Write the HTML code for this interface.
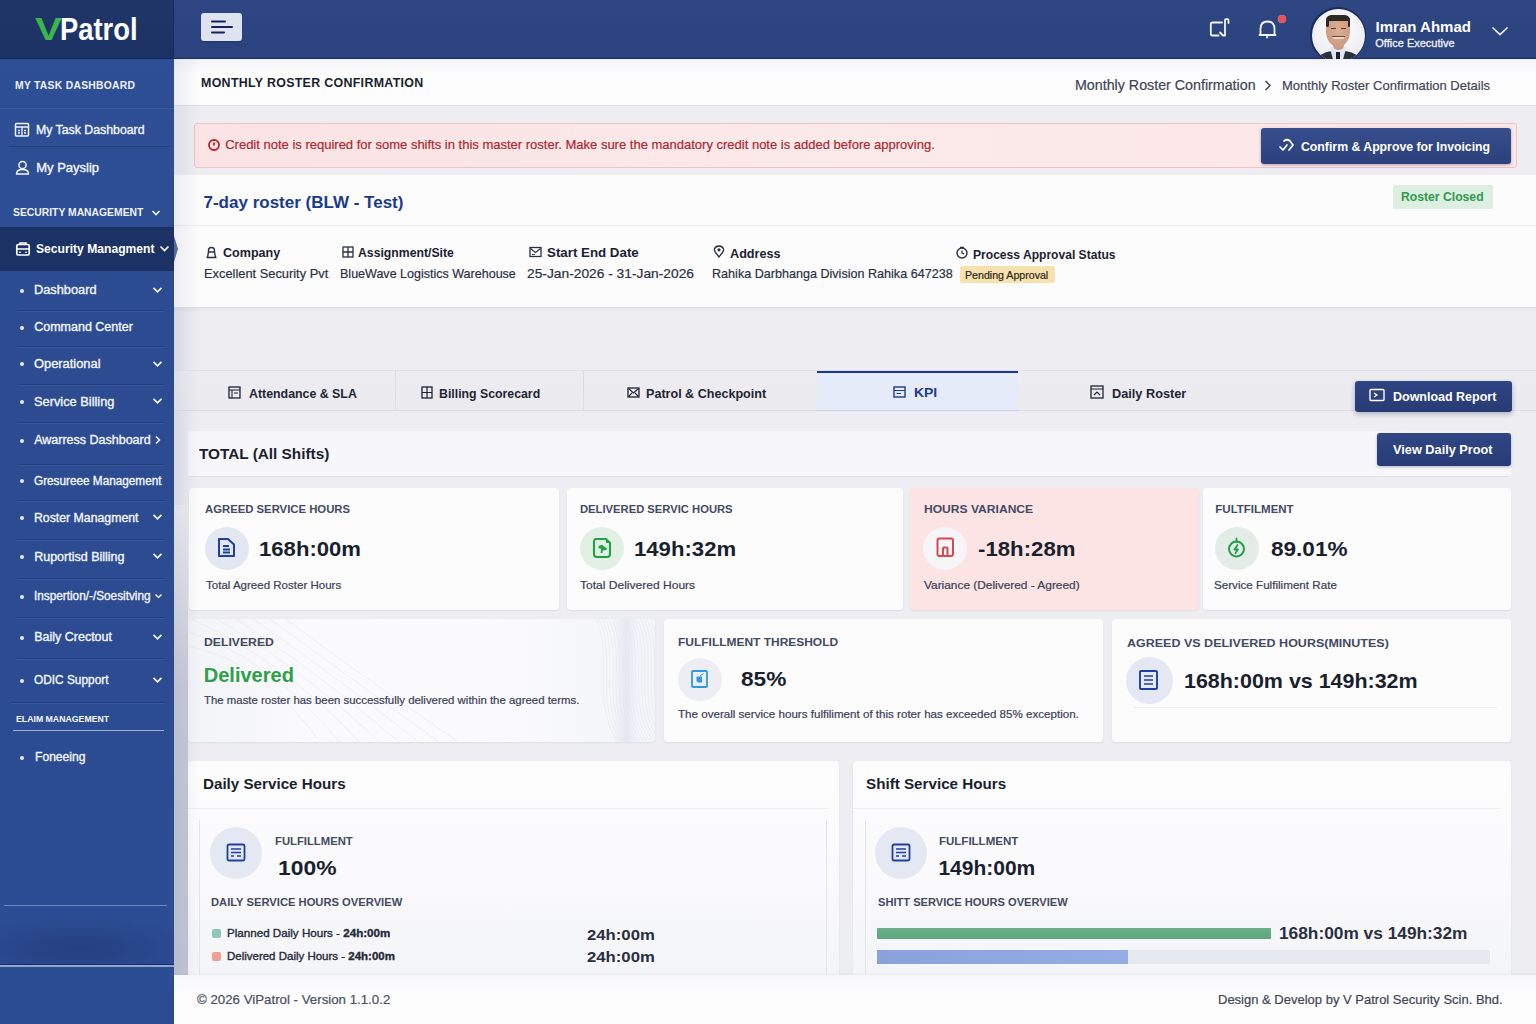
<!DOCTYPE html><html><head><meta charset="utf-8"><style>
*{box-sizing:border-box;margin:0;padding:0}
html,body{width:1536px;height:1024px;overflow:hidden}
body{font-family:"Liberation Sans",sans-serif;background:#ededf2;position:relative}
.a{position:absolute}
.t{position:absolute;line-height:1;white-space:nowrap;transform-origin:0 50%}
svg{position:absolute;overflow:visible}
</style></head><body>
<div class="a" style="left:174px;top:300px;width:20px;height:205px;background:linear-gradient(90deg,rgba(150,155,180,0.10),rgba(150,155,180,0))"></div>
<div class="a" style="left:174px;top:505px;width:14px;height:470px;background:linear-gradient(180deg,rgba(185,189,204,0.0),rgba(185,189,204,0.75) 40%,rgba(190,194,208,0.9))"></div>
<div class="a" style="left:0;top:0;width:174px;height:1024px;background:linear-gradient(180deg,#2e4f96 0%,#2c4b91 40%,#2c4c93 100%)"></div>
<div class="a" style="left:0;top:0;width:174px;height:59px;background:linear-gradient(180deg,#203669,#1c3164);border-bottom:1px solid #142450"></div>
<div class="t" style="left:34.6px;top:14.1px;font-size:30.5px;font-weight:bold;color:#3cb54a;transform:scaleX(1.325);">V</div>
<div class="t" style="left:60.2px;top:14.1px;font-size:30.5px;font-weight:bold;color:#ffffff;transform:scaleX(0.898);">Patrol</div>
<div class="t" style="left:15.3px;top:79.7px;font-size:11px;font-weight:bold;color:#eef2fa;letter-spacing:0.3px;transform:scaleX(0.939);">MY TASK DASHBOARD</div>
<div class="a" style="left:0;top:107px;width:174px;height:2px;background:linear-gradient(180deg,#243f7c,#4564a8)"></div>
<svg style="left:14px;top:122px" width="16" height="16"><rect x="1.5" y="1.5" width="13" height="12.5" rx="1" fill="none" stroke="#f3f6fc" stroke-width="1.5"/><path d="M1.5 5 H14.5 M8 5 V14 M4 8.5 H6 M10 8.5 H12 M4 11 H6 M10 11 H12" fill="none" stroke="#f3f6fc" stroke-width="1.3"/></svg>
<div class="t" style="left:36.2px;top:123.0px;font-size:13px;font-weight:normal;color:#f3f6fc;-webkit-text-stroke:0.35px #f3f6fc;transform:scaleX(0.947);">My Task Dashboard</div>
<div class="a" style="left:9px;top:146px;width:163px;height:1px;background:#243f7c"></div>
<svg style="left:15px;top:160px" width="15" height="15"><circle cx="7.5" cy="5" r="3.6" fill="none" stroke="#f3f6fc" stroke-width="1.5"/><path d="M1.5 14 Q1.5 9.5 7.5 9.5 Q13.5 9.5 13.5 14 Z" fill="none" stroke="#f3f6fc" stroke-width="1.5" stroke-linejoin="round"/></svg>
<div class="t" style="left:36.2px;top:160.9px;font-size:13px;font-weight:normal;color:#f3f6fc;-webkit-text-stroke:0.35px #f3f6fc;">My Payslip</div>
<div class="t" style="left:13.3px;top:206.7px;font-size:11px;font-weight:bold;color:#eef2fa;transform:scaleX(0.941);">SECURITY MANAGEMENT</div>
<svg style="left:151px;top:209px" width="10" height="8"><path d="M1.5 2 L5 5.5 L8.5 2" fill="none" stroke="#eef2fa" stroke-width="1.6"/></svg>
<div class="a" style="left:0;top:227px;width:174px;height:44px;background:#1c3164"></div>
<svg style="left:15px;top:241px" width="16" height="15"><path d="M5 3.5 V2 H11 V3.5" fill="none" stroke="#fff" stroke-width="1.6"/><rect x="1.8" y="3.5" width="12.4" height="10.5" rx="1.5" fill="none" stroke="#fff" stroke-width="1.7"/><path d="M1.8 8 H14.2 M5 10.5 V12 M11 10.5 V12" fill="none" stroke="#fff" stroke-width="1.5"/></svg>
<div class="t" style="left:36.2px;top:241.9px;font-size:13px;font-weight:bold;color:#ffffff;transform:scaleX(0.932);">Security Managment</div>
<svg style="left:159px;top:244px" width="12" height="10"><path d="M1.5 2.5 L5.5 6.5 L9.5 2.5" fill="none" stroke="#ffffff" stroke-width="1.6"/></svg>
<div class="a" style="left:20px;top:289px;width:4px;height:4px;border-radius:2px;background:#e6ebf6"></div>
<div class="t" style="left:34.2px;top:284.1px;font-size:12.5px;font-weight:normal;color:#f3f6fc;-webkit-text-stroke:0.35px #f3f6fc;transform:scaleX(1.022);">Dashboard</div>
<svg style="left:152px;top:286px" width="11" height="8"><path d="M1.5 1.8 L5.5 5.8 L9.5 1.8" fill="none" stroke="#eef2fa" stroke-width="1.8"/></svg>
<div class="a" style="left:17px;top:310px;width:148px;height:1px;background:#243f7e;box-shadow:0 1px 0 rgba(90,120,190,0.25)"></div>
<div class="a" style="left:20px;top:326px;width:4px;height:4px;border-radius:2px;background:#e6ebf6"></div>
<div class="t" style="left:34.2px;top:321.0px;font-size:12.5px;font-weight:normal;color:#f3f6fc;-webkit-text-stroke:0.35px #f3f6fc;">Command Center</div>
<div class="a" style="left:17px;top:346px;width:148px;height:1px;background:#243f7e;box-shadow:0 1px 0 rgba(90,120,190,0.25)"></div>
<div class="a" style="left:20px;top:362px;width:4px;height:4px;border-radius:2px;background:#e6ebf6"></div>
<div class="t" style="left:34.2px;top:357.9px;font-size:12.5px;font-weight:normal;color:#f3f6fc;-webkit-text-stroke:0.35px #f3f6fc;transform:scaleX(1.029);">Operational</div>
<svg style="left:152px;top:360px" width="11" height="8"><path d="M1.5 1.8 L5.5 5.8 L9.5 1.8" fill="none" stroke="#eef2fa" stroke-width="1.8"/></svg>
<div class="a" style="left:17px;top:384px;width:148px;height:1px;background:#243f7e;box-shadow:0 1px 0 rgba(90,120,190,0.25)"></div>
<div class="a" style="left:20px;top:400px;width:4px;height:4px;border-radius:2px;background:#e6ebf6"></div>
<div class="t" style="left:34.2px;top:395.8px;font-size:12.5px;font-weight:normal;color:#f3f6fc;-webkit-text-stroke:0.35px #f3f6fc;transform:scaleX(1.025);">Service Billing</div>
<svg style="left:152px;top:397px" width="11" height="8"><path d="M1.5 1.8 L5.5 5.8 L9.5 1.8" fill="none" stroke="#eef2fa" stroke-width="1.8"/></svg>
<div class="a" style="left:17px;top:422px;width:148px;height:1px;background:#243f7e;box-shadow:0 1px 0 rgba(90,120,190,0.25)"></div>
<div class="a" style="left:20px;top:439px;width:4px;height:4px;border-radius:2px;background:#e6ebf6"></div>
<div class="t" style="left:34.2px;top:434.4px;font-size:12.5px;font-weight:normal;color:#f3f6fc;-webkit-text-stroke:0.35px #f3f6fc;">Awarress Dashboard</div>
<svg style="left:154px;top:435px" width="8" height="10"><path d="M2 1.5 L5.5 5 L2 8.5" fill="none" stroke="#eef2fa" stroke-width="1.5"/></svg>
<div class="a" style="left:17px;top:464px;width:148px;height:1px;background:#243f7e;box-shadow:0 1px 0 rgba(90,120,190,0.25)"></div>
<div class="a" style="left:20px;top:479px;width:4px;height:4px;border-radius:2px;background:#e6ebf6"></div>
<div class="t" style="left:34.2px;top:474.8px;font-size:12.5px;font-weight:normal;color:#f3f6fc;-webkit-text-stroke:0.35px #f3f6fc;transform:scaleX(0.941);">Gresureee Management</div>
<div class="a" style="left:17px;top:500px;width:148px;height:1px;background:#243f7e;box-shadow:0 1px 0 rgba(90,120,190,0.25)"></div>
<div class="a" style="left:20px;top:516px;width:4px;height:4px;border-radius:2px;background:#e6ebf6"></div>
<div class="t" style="left:34.2px;top:511.8px;font-size:12.5px;font-weight:normal;color:#f3f6fc;-webkit-text-stroke:0.35px #f3f6fc;transform:scaleX(0.983);">Roster Managment</div>
<svg style="left:152px;top:513px" width="11" height="8"><path d="M1.5 1.8 L5.5 5.8 L9.5 1.8" fill="none" stroke="#eef2fa" stroke-width="1.8"/></svg>
<div class="a" style="left:17px;top:539px;width:148px;height:1px;background:#243f7e;box-shadow:0 1px 0 rgba(90,120,190,0.25)"></div>
<div class="a" style="left:20px;top:555px;width:4px;height:4px;border-radius:2px;background:#e6ebf6"></div>
<div class="t" style="left:34.2px;top:550.7px;font-size:12.5px;font-weight:normal;color:#f3f6fc;-webkit-text-stroke:0.35px #f3f6fc;">Ruportisd Billing</div>
<svg style="left:152px;top:552px" width="11" height="8"><path d="M1.5 1.8 L5.5 5.8 L9.5 1.8" fill="none" stroke="#eef2fa" stroke-width="1.8"/></svg>
<div class="a" style="left:17px;top:578px;width:148px;height:1px;background:#243f7e;box-shadow:0 1px 0 rgba(90,120,190,0.25)"></div>
<div class="a" style="left:20px;top:595px;width:4px;height:4px;border-radius:2px;background:#e6ebf6"></div>
<div class="t" style="left:34.2px;top:590.4px;font-size:12.5px;font-weight:normal;color:#f3f6fc;-webkit-text-stroke:0.35px #f3f6fc;transform:scaleX(0.942);">Inspertion/-/Soesitving</div>
<svg style="left:154px;top:593px" width="9" height="7"><path d="M1.5 1.5 L4.5 4.5 L7.5 1.5" fill="none" stroke="#eef2fa" stroke-width="1.5"/></svg>
<div class="a" style="left:17px;top:617px;width:148px;height:1px;background:#243f7e;box-shadow:0 1px 0 rgba(90,120,190,0.25)"></div>
<div class="a" style="left:20px;top:636px;width:4px;height:4px;border-radius:2px;background:#e6ebf6"></div>
<div class="t" style="left:34.2px;top:631.0px;font-size:12.5px;font-weight:normal;color:#f3f6fc;-webkit-text-stroke:0.35px #f3f6fc;">Baily Crectout</div>
<svg style="left:152px;top:633px" width="11" height="8"><path d="M1.5 1.8 L5.5 5.8 L9.5 1.8" fill="none" stroke="#eef2fa" stroke-width="1.8"/></svg>
<div class="a" style="left:17px;top:658px;width:148px;height:1px;background:#243f7e;box-shadow:0 1px 0 rgba(90,120,190,0.25)"></div>
<div class="a" style="left:20px;top:679px;width:4px;height:4px;border-radius:2px;background:#e6ebf6"></div>
<div class="t" style="left:34.2px;top:674.1px;font-size:12.5px;font-weight:normal;color:#f3f6fc;-webkit-text-stroke:0.35px #f3f6fc;transform:scaleX(0.949);">ODIC Support</div>
<svg style="left:152px;top:676px" width="11" height="8"><path d="M1.5 1.8 L5.5 5.8 L9.5 1.8" fill="none" stroke="#eef2fa" stroke-width="1.8"/></svg>
<div class="a" style="left:10px;top:702px;width:156px;height:1px;background:#243f7e;box-shadow:0 1px 0 rgba(90,120,190,0.25)"></div>
<div class="t" style="left:16.2px;top:714.9px;font-size:9px;font-weight:bold;color:#f5f7fc;transform:scaleX(0.970);">ELAIM MANAGEMENT</div>
<div class="a" style="left:13px;top:730px;width:151px;height:1px;background:#9fb0d6"></div>
<div class="a" style="left:20px;top:756px;width:4px;height:4px;border-radius:2px;background:#e6ebf6"></div>
<div class="t" style="left:35.0px;top:751.4px;font-size:12.5px;font-weight:normal;color:#f3f6fc;-webkit-text-stroke:0.35px #f3f6fc;transform:scaleX(0.969);">Foneeing</div>
<div class="a" style="left:4px;top:905px;width:163px;height:1px;background:#6d86bd"></div>
<div class="a" style="left:0;top:912px;width:174px;height:52px;background:radial-gradient(ellipse 70% 60% at 45% 70%,rgba(20,38,90,0.3),rgba(20,38,90,0))"></div>
<div class="a" style="left:0;top:964px;width:174px;height:1px;background:#1a2f66"></div>
<div class="a" style="left:0;top:965px;width:174px;height:1.5px;background:#94a6d0"></div>
<div class="a" style="left:174px;top:0;width:1362px;height:59px;background:linear-gradient(180deg,#2e4783,#2a427e);border-bottom:1px solid #1b2e62"></div>
<div class="a" style="left:173px;top:0;width:1px;height:59px;background:#1a2c5c"></div>
<div class="a" style="left:201px;top:13px;width:41px;height:28px;background:#dfe3ef;border-radius:3px;box-shadow:0 1px 2px rgba(0,0,0,0.25)"></div>
<svg style="left:211px;top:19px" width="24" height="16"><path d="M1 2.5 H14 M1 8 H21 M1 13.5 H13" stroke="#16225a" stroke-width="2" stroke-linecap="round"/></svg>
<svg style="left:1208px;top:17px" width="24" height="22"><path d="M14 5.5 H4.5 Q2.8 5.5 2.8 7.2 V16.8 Q2.8 18.5 4.5 18.5 H10.5 M17 18.5 V3.2 Q17 2.2 18 2.2 H19.5 Q20.5 2.2 20.5 3.2 V6 M12 15.5 L15 18.5 H17" fill="none" stroke="#f2f5fb" stroke-width="1.8" stroke-linecap="round" stroke-linejoin="round"/></svg>
<svg style="left:1257px;top:18px" width="24" height="22"><path d="M3.5 17 V11 Q3.5 3.5 10.5 3.5 Q17.5 3.5 17.5 11 V17 M2.5 17 H18.5 M10.5 17 L10 19.5" fill="none" stroke="#f2f5fb" stroke-width="1.8" stroke-linecap="round" stroke-linejoin="round"/></svg>
<div class="a" style="left:1277.5px;top:14.5px;width:8px;height:8px;border-radius:50%;background:#e3545b;box-shadow:0 0 1px #f9c"></div>
<div class="a" style="left:1310px;top:7px;width:56px;height:52px;overflow:hidden">
<div class="a" style="left:0;top:0;width:56px;height:56px;border-radius:50%;background:#1a2a5a"></div>
<div class="a" style="left:1.5px;top:1.5px;width:53px;height:53px;border-radius:50%;background:radial-gradient(circle at 50% 40%,#ffffff,#f0f0f2 60%,#e4e4e8);overflow:hidden">
<div class="a" style="left:1px;top:42px;width:51px;height:20px;border-radius:24px 24px 0 0;background:#2a3040"></div>
<div class="a" style="left:18px;top:38px;width:17px;height:16px;background:#dde6f2;clip-path:polygon(0 0,100% 0,75% 100%,25% 100%)"></div>
<div class="a" style="left:24.5px;top:43px;width:4px;height:12px;background:#1c2030;clip-path:polygon(0 0,100% 0,100% 70%,50% 100%,0 70%)"></div>
<div class="a" style="left:21px;top:33px;width:11px;height:8px;background:#c99a80;border-radius:0 0 5px 5px"></div>
<div class="a" style="left:14.5px;top:6.5px;width:24px;height:32px;border-radius:46% 46% 50% 50%;background:radial-gradient(ellipse at 50% 45%,#dcae93,#c89478)"></div>
<div class="a" style="left:14.5px;top:6px;width:24px;height:6px;border-radius:12px 12px 2px 2px;background:#2e2826"></div>
<div class="a" style="left:14.5px;top:9px;width:2.5px;height:9px;border-radius:2px;background:#2e2826"></div>
<div class="a" style="left:36px;top:9px;width:2.5px;height:9px;border-radius:2px;background:#2e2826"></div>
<div class="a" style="left:19px;top:19px;width:5px;height:1.6px;background:#4a3a34"></div>
<div class="a" style="left:29px;top:19px;width:5px;height:1.6px;background:#4a3a34"></div>
<div class="a" style="left:20px;top:27px;width:13px;height:3.5px;border-radius:0 0 7px 7px;background:#e9d6cf;border-top:1px solid #6a4a40"></div>
</div>
</div>
<div class="t" style="left:1375.6px;top:19.2px;font-size:15px;font-weight:bold;color:#ffffff;">Imran Ahmad</div>
<div class="t" style="left:1375.3px;top:37.9px;font-size:11px;font-weight:normal;color:#f0f3fa;-webkit-text-stroke:0.3px #f0f3fa;">Office Executive</div>
<svg style="left:1491px;top:25px" width="18" height="12"><path d="M2 3 L9 9.5 L16 3" fill="none" stroke="#eef2fa" stroke-width="1.7" stroke-linecap="round"/></svg>
<div class="a" style="left:174px;top:60px;width:1362px;height:46px;background:linear-gradient(180deg,#f4f4f7,#fdfdfe 30%,#fdfdfe);border-bottom:1px solid #dfe0e6"></div>
<div class="t" style="left:201.3px;top:76.5px;font-size:12px;font-weight:bold;color:#1a1f2e;letter-spacing:0.3px;transform:scaleX(1.034);">MONTHLY ROSTER CONFIRMATION</div>
<div class="t" style="left:1074.7px;top:78.1px;font-size:14px;font-weight:normal;color:#3f4558;-webkit-text-stroke:0.2px #3f4558;transform:scaleX(1.018);">Monthly Roster Confirmation</div>
<svg style="left:1263px;top:79px" width="10" height="13"><path d="M2.5 2 L7 6.5 L2.5 11" fill="none" stroke="#3f4558" stroke-width="1.5"/></svg>
<div class="t" style="left:1281.7px;top:78.5px;font-size:13.5px;font-weight:normal;color:#3f4558;-webkit-text-stroke:0.2px #3f4558;transform:scaleX(0.963);">Monthly Roster Confirmation Details</div>
<div class="a" style="left:194px;top:123px;width:1323px;height:45px;background:linear-gradient(90deg,#fae3e4,#fce9e9 50%,#fbe7e8);border:1px solid #f0c3c5;border-radius:3px"></div>
<svg style="left:207px;top:138px" width="14" height="14"><circle cx="7" cy="7" r="5" fill="none" stroke="#b6232c" stroke-width="1.8"/><path d="M7 4.5 V7.5" stroke="#b6232c" stroke-width="1.8"/></svg>
<div class="t" style="left:225.2px;top:138.4px;font-size:13px;font-weight:normal;color:#ad2931;-webkit-text-stroke:0.2px #ad2931;">Credit note is required for some shifts in this master roster. Make sure the mandatory credit note is added before approving.</div>
<div class="a" style="left:1261px;top:128px;width:250px;height:36px;background:linear-gradient(180deg,#374e8d,#2c417c);border-radius:3px;box-shadow:0 1px 3px rgba(20,30,70,0.35)"></div>
<svg style="left:1277px;top:137px" width="20" height="18"><path d="M7 4 Q10 1.5 13 4 L16 8 L12 13 M3 10 L6 13 L10 8" fill="none" stroke="#ffffff" stroke-width="1.7" stroke-linecap="round" stroke-linejoin="round"/></svg>
<div class="t" style="left:1300.7px;top:139.9px;font-size:13px;font-weight:bold;color:#ffffff;transform:scaleX(0.944);">Confirm &amp; Approve for Invoicing</div>
<div class="a" style="left:174px;top:175px;width:1362px;height:133px;background:#fcfcfd;border-bottom:1px solid #dedfe5;box-shadow:0 2px 3px rgba(40,50,90,0.05)"></div>
<div class="a" style="left:174px;top:225px;width:1362px;height:1px;background:#ededf1"></div>
<div class="t" style="left:203.5px;top:194.1px;font-size:17px;font-weight:bold;color:#1a3a8c;">7-day roster (BLW - Test)</div>
<div class="a" style="left:1393px;top:185px;width:100px;height:24px;background:#dcefe0;border-radius:2px"></div>
<div class="t" style="left:1401.2px;top:190.4px;font-size:13px;font-weight:bold;color:#2f9a4c;transform:scaleX(0.937);">Roster Closed</div>
<svg style="left:205px;top:246px" width="13" height="13"><path d="M3.5 6 V4.5 Q3.5 1.5 6.5 1.5 Q9.5 1.5 9.5 4.5 V6 M1.5 11.5 H11.5 M2.5 11.5 L3.5 6 H9.5 L10.5 11.5" fill="none" stroke="#2a3040" stroke-width="1.4"/></svg>
<div class="t" style="left:222.6px;top:245.9px;font-size:13px;font-weight:bold;color:#1c2130;transform:scaleX(0.965);">Company</div>
<div class="t" style="left:204.2px;top:267.2px;font-size:13px;font-weight:normal;color:#2b3142;-webkit-text-stroke:0.2px #2b3142;transform:scaleX(0.988);">Excellent Security Pvt</div>
<svg style="left:342px;top:246px" width="12" height="12"><rect x="1" y="1" width="10" height="10" fill="none" stroke="#2a3040" stroke-width="1.3"/><path d="M6 1 V11 M1 6 H11" stroke="#2a3040" stroke-width="1.3"/></svg>
<div class="t" style="left:357.9px;top:245.9px;font-size:13px;font-weight:bold;color:#1c2130;transform:scaleX(0.941);">Assignment/Site</div>
<div class="t" style="left:340.0px;top:267.2px;font-size:13px;font-weight:normal;color:#2b3142;-webkit-text-stroke:0.2px #2b3142;transform:scaleX(0.963);">BlueWave Logistics Warehouse</div>
<svg style="left:529px;top:246px" width="13" height="12"><rect x="1" y="1.5" width="11" height="9" fill="none" stroke="#2a3040" stroke-width="1.3"/><path d="M1.5 2.5 L6.5 6.5 L11.5 2.5 M3 8.5 H6" fill="none" stroke="#2a3040" stroke-width="1.2"/></svg>
<div class="t" style="left:547.0px;top:245.9px;font-size:13px;font-weight:bold;color:#1c2130;transform:scaleX(1.024);">Start End Date</div>
<div class="t" style="left:527.2px;top:267.2px;font-size:13px;font-weight:normal;color:#2b3142;-webkit-text-stroke:0.2px #2b3142;transform:scaleX(1.060);">25-Jan-2026 - 31-Jan-2026</div>
<svg style="left:713px;top:245px" width="12" height="13"><path d="M6 12 L2.5 7.5 Q1 5.5 1.5 4 Q2.5 1 6 1 Q9.5 1 10.5 4 Q11 5.5 9.5 7.5 Z" fill="none" stroke="#2a3040" stroke-width="1.3"/><circle cx="6" cy="4.8" r="1.6" fill="#2a3040"/></svg>
<div class="t" style="left:730.2px;top:246.6px;font-size:13px;font-weight:bold;color:#1c2130;transform:scaleX(0.972);">Address</div>
<div class="t" style="left:712.2px;top:266.9px;font-size:13px;font-weight:normal;color:#2b3142;-webkit-text-stroke:0.2px #2b3142;transform:scaleX(0.968);">Rahika Darbhanga Division Rahika 647238</div>
<svg style="left:955px;top:246px" width="14" height="13"><circle cx="7" cy="7" r="5" fill="none" stroke="#2a3040" stroke-width="1.4"/><path d="M7 4.5 V7 L9 8 M5 1.5 H9" fill="none" stroke="#2a3040" stroke-width="1.3"/></svg>
<div class="t" style="left:973.2px;top:247.9px;font-size:13px;font-weight:bold;color:#1c2130;transform:scaleX(0.929);">Process Approval Status</div>
<div class="a" style="left:960px;top:266px;width:95px;height:17px;background:#f7e2ad;border-radius:2px"></div>
<div class="t" style="left:965.4px;top:270.1px;font-size:10.5px;font-weight:normal;color:#2a2418;-webkit-text-stroke:0.2px #2a2418;transform:scaleX(1.011);">Pending Approval</div>
<div class="a" style="left:174px;top:370px;width:1362px;height:41px;background:linear-gradient(180deg,#ececf1,#eaeaef);border-top:1px solid #e1e2e8;border-bottom:1px solid #dcdde3"></div>
<div class="a" style="left:395px;top:371px;width:1px;height:40px;background:#dddee4"></div>
<div class="a" style="left:583px;top:371px;width:1px;height:40px;background:#dddee4"></div>
<div class="a" style="left:817px;top:371px;width:201px;height:40px;background:#e5ebf8;border-top:2.5px solid #1c3896;border-bottom:1px solid #c9d3ee"></div>
<svg style="left:228px;top:386px" width="13" height="13"><rect x="1" y="1" width="11" height="11" fill="none" stroke="#1f2433" stroke-width="1.3"/><path d="M1 4 H12 M4 4 V12 M6 7 H10" fill="none" stroke="#1f2433" stroke-width="1.1"/></svg>
<div class="t" style="left:248.9px;top:387.2px;font-size:13px;font-weight:bold;color:#1f2433;transform:scaleX(0.951);">Attendance &amp; SLA</div>
<svg style="left:421px;top:386px" width="12" height="13"><rect x="1" y="1" width="10" height="11" fill="none" stroke="#1f2433" stroke-width="1.3"/><path d="M6 1 V12 M1 6.5 H11" stroke="#1f2433" stroke-width="1.2"/></svg>
<div class="t" style="left:439.2px;top:387.2px;font-size:13px;font-weight:bold;color:#1f2433;transform:scaleX(0.946);">Billing Scorecard</div>
<svg style="left:627px;top:387px" width="13" height="11"><rect x="1" y="1" width="11" height="9" fill="none" stroke="#1f2433" stroke-width="1.3"/><path d="M1.5 1.5 L6.5 6 L11.5 1.5 M1.5 9.5 L5 6 M11.5 9.5 L8 6" fill="none" stroke="#1f2433" stroke-width="1.1"/></svg>
<div class="t" style="left:646.0px;top:387.2px;font-size:13px;font-weight:bold;color:#1f2433;transform:scaleX(0.967);">Patrol &amp; Checkpoint</div>
<svg style="left:893px;top:386px" width="13" height="12"><rect x="1" y="1" width="11" height="10" fill="none" stroke="#1f3a88" stroke-width="1.4"/><path d="M1 4.5 H12 M3.5 7.5 H8" fill="none" stroke="#1f3a88" stroke-width="1.2"/></svg>
<div class="t" style="left:914.2px;top:386.4px;font-size:13px;font-weight:bold;color:#1f3a88;transform:scaleX(1.069);">KPI</div>
<svg style="left:1090px;top:385px" width="14" height="14"><rect x="1" y="1" width="12" height="12" fill="none" stroke="#1f2433" stroke-width="1.3"/><path d="M1 4 H13 M4 10 L7 7 L10 10" fill="none" stroke="#1f2433" stroke-width="1.2"/></svg>
<div class="t" style="left:1112.2px;top:387.2px;font-size:13px;font-weight:bold;color:#1f2433;transform:scaleX(0.979);">Daily Roster</div>
<div class="a" style="left:1355px;top:381px;width:157px;height:31px;background:linear-gradient(180deg,#2f4584,#273b74);border-radius:3px;box-shadow:0 2px 5px rgba(20,30,70,0.3)"></div>
<svg style="left:1369px;top:388px" width="17" height="15"><rect x="1" y="1.5" width="14" height="11" rx="1" fill="none" stroke="#fff" stroke-width="1.4"/><path d="M5 5 L8 7 L5 9" fill="none" stroke="#fff" stroke-width="1.3"/></svg>
<div class="t" style="left:1393.2px;top:390.4px;font-size:13px;font-weight:bold;color:#ffffff;transform:scaleX(0.960);">Download Report</div>
<div class="a" style="left:188px;top:431px;width:1323px;height:46px;background:#f7f7fa;border-radius:3px;border-bottom:1px solid #e0e1e7"></div>
<div class="t" style="left:199.1px;top:445.8px;font-size:15px;font-weight:bold;color:#1b2030;transform:scaleX(1.022);">TOTAL (All Shifts)</div>
<div class="a" style="left:1377px;top:433px;width:134px;height:33px;background:linear-gradient(180deg,#304684,#283c76);border-radius:3px;box-shadow:0 1px 3px rgba(20,30,70,0.3)"></div>
<div class="t" style="left:1393.2px;top:442.9px;font-size:13px;font-weight:bold;color:#ffffff;transform:scaleX(0.980);">View Daily Proot</div>
<div class="a" style="left:189px;top:488px;width:370px;height:122px;background:#fcfcfd;border-radius:4px;box-shadow:0 1px 2px rgba(40,50,90,0.08)"></div>
<div class="a" style="left:567px;top:488px;width:336px;height:122px;background:#fcfcfd;border-radius:4px;box-shadow:0 1px 2px rgba(40,50,90,0.08)"></div>
<div class="a" style="left:910px;top:488px;width:289px;height:122px;background:#fbe4e3;border-radius:4px;box-shadow:0 1px 2px rgba(40,50,90,0.08)"></div>
<div class="a" style="left:1203px;top:488px;width:308px;height:122px;background:#fcfcfd;border-radius:4px;box-shadow:0 1px 2px rgba(40,50,90,0.08)"></div>
<div class="t" style="left:204.6px;top:503.7px;font-size:11.5px;font-weight:bold;color:#434a63;transform:scaleX(0.984);">AGREED SERVICE HOURS</div>
<div class="t" style="left:580.1px;top:503.7px;font-size:11.5px;font-weight:bold;color:#434a63;transform:scaleX(0.976);">DELIVERED SERVIC HOURS</div>
<div class="t" style="left:923.9px;top:503.7px;font-size:11.5px;font-weight:bold;color:#434a63;transform:scaleX(1.050);">HOURS VARIANCE</div>
<div class="t" style="left:1215.3px;top:503.7px;font-size:11.5px;font-weight:bold;color:#434a63;">FULTFILMENT</div>
<div class="a" style="left:204.6px;top:526.5px;width:44px;height:43px;border-radius:50%;background:#e3e7f1"></div>
<div class="a" style="left:579.6px;top:526.5px;width:44px;height:43px;border-radius:50%;background:#e2efe5"></div>
<div class="a" style="left:922.5px;top:526.5px;width:44px;height:43px;border-radius:50%;background:#f6f5f8"></div>
<div class="a" style="left:1214.5px;top:526.5px;width:44px;height:43px;border-radius:50%;background:#e3ece6"></div>
<svg style="left:217px;top:537px" width="20" height="21"><path d="M2 2 H11 L17 7.5 V19 H2 Z M6 9 H12 M6 12.5 H13 M6 15.5 H13" fill="none" stroke="#1f3fa0" stroke-width="2" stroke-linejoin="round"/></svg>
<svg style="left:592px;top:537px" width="20" height="22"><path d="M4 2 H14 L18 6 V17 Q18 20 15 20 H5 Q2 20 2 17 V5 Q2 2 4 2 Z" fill="none" stroke="#22a045" stroke-width="2.1" stroke-linejoin="round"/><path d="M14 2.5 L17.5 6 L14 6 Z" fill="#22a045"/><path d="M9.5 16 L10 12 M7 11 Q7.5 8.5 10 9 L14 12 L10.5 12.5" fill="#22a045" stroke="#22a045" stroke-width="1.8" stroke-linejoin="round"/></svg>
<svg style="left:936px;top:537px" width="19" height="21"><rect x="1.5" y="1.5" width="15.5" height="17.5" rx="2" fill="none" stroke="#d9474c" stroke-width="2"/><path d="M7 19 V11.5 Q7 10.5 8 10.5 H10.5 Q11.5 10.5 11.5 11.5 V19" fill="none" stroke="#d9474c" stroke-width="2"/></svg>
<svg style="left:1226px;top:537px" width="21" height="22"><circle cx="10.5" cy="12" r="7.5" fill="none" stroke="#22a045" stroke-width="2"/><path d="M10.5 1.5 V5 M11.5 8 L8.5 12.5 H12 L9.5 16" fill="none" stroke="#22a045" stroke-width="1.8" stroke-linejoin="round" stroke-linecap="round"/></svg>
<div class="t" style="left:258.7px;top:537.6px;font-size:21px;font-weight:bold;color:#1a1f2e;transform:scaleX(1.053);">168h:00m</div>
<div class="t" style="left:633.5px;top:537.6px;font-size:21px;font-weight:bold;color:#1a1f2e;transform:scaleX(1.054);">149h:32m</div>
<div class="t" style="left:978.4px;top:537.6px;font-size:21px;font-weight:bold;color:#1a1f2e;transform:scaleX(1.057);">-18h:28m</div>
<div class="t" style="left:1270.7px;top:537.6px;font-size:21px;font-weight:bold;color:#1a1f2e;transform:scaleX(1.074);">89.01%</div>
<div class="t" style="left:205.7px;top:580.4px;font-size:11px;font-weight:normal;color:#3b4155;-webkit-text-stroke:0.2px #3b4155;transform:scaleX(1.048);">Total Agreed Roster Hours</div>
<div class="t" style="left:580.1px;top:580.4px;font-size:11px;font-weight:normal;color:#3b4155;-webkit-text-stroke:0.2px #3b4155;transform:scaleX(1.095);">Total Delivered Hours</div>
<div class="t" style="left:923.9px;top:580.4px;font-size:11px;font-weight:normal;color:#3b4155;-webkit-text-stroke:0.2px #3b4155;transform:scaleX(1.080);">Variance (Delivered - Agreed)</div>
<div class="t" style="left:1214.3px;top:580.4px;font-size:11px;font-weight:normal;color:#3b4155;-webkit-text-stroke:0.2px #3b4155;transform:scaleX(1.058);">Service Fulfiliment Rate</div>
<div class="a" style="left:188px;top:619px;width:467px;height:123px;background:linear-gradient(90deg,#f3f4f8,#fafafc 25%,#fbfbfd 60%,#f4f5f9);border-radius:4px;box-shadow:0 1px 2px rgba(40,50,90,0.08);overflow:hidden"><div class="a" style="left:425px;top:0;width:26px;height:123px;background:linear-gradient(90deg,rgba(220,224,236,0),rgba(220,224,236,0.6),rgba(220,224,236,0))"></div><svg style="left:0;top:0" width="467" height="123"><g fill="none" stroke="#e2e5ef" stroke-width="0.5"><path d="M408.0 0 C426.0 40 402.0 80 430.0 123"/><path d="M411.2 0 C429.2 40 405.2 80 433.2 123"/><path d="M414.4 0 C432.4 40 408.4 80 436.4 123"/><path d="M417.6 0 C435.6 40 411.6 80 439.6 123"/><path d="M420.8 0 C438.8 40 414.8 80 442.8 123"/><path d="M424.0 0 C442.0 40 418.0 80 446.0 123"/><path d="M427.2 0 C445.2 40 421.2 80 449.2 123"/><path d="M430.4 0 C448.4 40 424.4 80 452.4 123"/><path d="M433.6 0 C451.6 40 427.6 80 455.6 123"/><path d="M436.8 0 C454.8 40 430.8 80 458.8 123"/><path d="M440.0 0 C458.0 40 434.0 80 462.0 123"/><path d="M443.2 0 C461.2 40 437.2 80 465.2 123"/><path d="M446.4 0 C464.4 40 440.4 80 468.4 123"/><path d="M449.6 0 C467.6 40 443.6 80 471.6 123"/><path d="M452.8 0 C470.8 40 446.8 80 474.8 123"/><path d="M456.0 0 C474.0 40 450.0 80 478.0 123"/><path d="M459.2 0 C477.2 40 453.2 80 481.2 123"/><path d="M462.4 0 C480.4 40 456.4 80 484.4 123"/><path d="M132.0 123 Q72.0 40 0 27.0"/><path d="M151.8 123 Q82.8 40 0 12.6"/><path d="M171.6 123 Q93.6 40 0 -1.8"/><path d="M191.4 123 Q104.4 40 0 -16.2"/><path d="M211.2 123 Q115.2 40 0 -30.6"/><path d="M231.0 123 Q126.0 40 0 -45.0"/><path d="M250.8 123 Q136.8 40 0 -59.4"/><path d="M270.6 123 Q147.6 40 0 -73.8"/></g></svg></div>
<div class="a" style="left:664px;top:619px;width:439px;height:123px;background:#fcfcfd;border-radius:4px;box-shadow:0 1px 2px rgba(40,50,90,0.08)"></div>
<div class="a" style="left:1112px;top:619px;width:399px;height:123px;background:#fcfcfd;border-radius:4px;box-shadow:0 1px 2px rgba(40,50,90,0.08)"></div>
<div class="t" style="left:204.3px;top:636.7px;font-size:11.5px;font-weight:bold;color:#434a63;transform:scaleX(1.062);">DELIVERED</div>
<div class="t" style="left:203.8px;top:665.0px;font-size:20px;font-weight:bold;color:#2ea04a;">Delivered</div>
<div class="t" style="left:204.3px;top:694.6px;font-size:11px;font-weight:normal;color:#3b4155;-webkit-text-stroke:0.2px #3b4155;transform:scaleX(1.037);">The maste roster has been successfully delivered within the agreed terms.</div>
<div class="t" style="left:678.3px;top:636.7px;font-size:11.5px;font-weight:bold;color:#434a63;transform:scaleX(1.040);">FULFILLMENT THRESHOLD</div>
<div class="a" style="left:678px;top:658px;width:44px;height:43px;border-radius:50%;background:#eceef4"></div>
<svg style="left:690px;top:669px" width="20" height="20"><rect x="2" y="2" width="15" height="16" rx="1" fill="none" stroke="#2f9ae0" stroke-width="1.8"/><path d="M6.5 7.5 H12 V13.5 H8 L6.5 12 Z" fill="#2f9ae0"/><path d="M10 7 L13.5 4.5" stroke="#2f9ae0" stroke-width="1"/></svg>
<div class="t" style="left:740.8px;top:669.0px;font-size:20px;font-weight:bold;color:#1a1f2e;transform:scaleX(1.134);">85%</div>
<div class="t" style="left:678.3px;top:708.6px;font-size:11px;font-weight:normal;color:#3b4155;-webkit-text-stroke:0.2px #3b4155;transform:scaleX(1.054);">The overall service hours fulfiliment of this roter has exceeded 85% exception.</div>
<div class="t" style="left:1126.9px;top:637.7px;font-size:11.5px;font-weight:bold;color:#434a63;transform:scaleX(1.087);">AGREED VS DELIVERED HOURS(MINUTES)</div>
<div class="a" style="left:1125.5px;top:657px;width:47px;height:47px;border-radius:50%;background:#e4e8f2"></div>
<svg style="left:1138px;top:669px" width="22" height="22"><rect x="2" y="2" width="17" height="18" rx="1" fill="none" stroke="#1f3fa0" stroke-width="1.9"/><path d="M6 7 H15 M6 11 H15 M6 15 H15" stroke="#1f3fa0" stroke-width="1.7"/></svg>
<div class="t" style="left:1184.4px;top:670.1px;font-size:21px;font-weight:bold;color:#1a1f2e;transform:scaleX(1.021);">168h:00m vs 149h:32m</div>
<div class="a" style="left:1133px;top:707px;width:364px;height:1px;background:#ececf1"></div>
<div class="a" style="left:188px;top:761px;width:651px;height:230px;background:linear-gradient(180deg,#fdfdfe 0%,#fafafc 50%,#f3f4f7 100%);border-radius:4px;box-shadow:0 1px 2px rgba(40,50,90,0.08)"></div>
<div class="a" style="left:853px;top:761px;width:658px;height:230px;background:linear-gradient(180deg,#fdfdfe 0%,#fafafc 50%,#f3f4f7 100%);border-radius:4px;box-shadow:0 1px 2px rgba(40,50,90,0.08)"></div>
<div class="a" style="left:188px;top:808px;width:640px;height:1px;background:#ececf1"></div>
<div class="a" style="left:853px;top:808px;width:647px;height:1px;background:#ececf1"></div>
<div class="t" style="left:203.1px;top:776.2px;font-size:15px;font-weight:bold;color:#1a1f2e;transform:scaleX(1.012);">Daily Service Hours</div>
<div class="t" style="left:866.1px;top:776.2px;font-size:15px;font-weight:bold;color:#1a1f2e;transform:scaleX(1.013);">Shift Service Hours</div>
<div class="a" style="left:199px;top:820px;width:628px;height:160px;border-left:1px solid #e3e4ea;border-right:1px solid #e3e4ea"></div>
<div class="a" style="left:865px;top:820px;width:636px;height:160px;border-left:1px solid #e3e4ea"></div>
<div class="a" style="left:210.2px;top:827px;width:52px;height:52px;border-radius:50%;background:#e4e8f2"></div>
<svg style="left:226.2px;top:843px" width="20" height="20"><rect x="1.5" y="1.5" width="17" height="16" rx="1.5" fill="none" stroke="#1f3fa0" stroke-width="1.8"/><path d="M5 6 H15 M5 9.5 H15 M5 13 H8 M11 13 H15" stroke="#1f3fa0" stroke-width="1.6"/></svg>
<div class="a" style="left:874.5px;top:827px;width:52px;height:52px;border-radius:50%;background:#e4e8f2"></div>
<svg style="left:890.5px;top:843px" width="20" height="20"><rect x="1.5" y="1.5" width="17" height="16" rx="1.5" fill="none" stroke="#1f3fa0" stroke-width="1.8"/><path d="M5 6 H15 M5 9.5 H15 M5 13 H8 M11 13 H15" stroke="#1f3fa0" stroke-width="1.6"/></svg>
<div class="t" style="left:275.3px;top:835.6px;font-size:11px;font-weight:bold;color:#434a63;transform:scaleX(1.026);">FULFILLMENT</div>
<div class="t" style="left:277.7px;top:856.5px;font-size:21px;font-weight:bold;color:#1a1f2e;transform:scaleX(1.089);">100%</div>
<div class="t" style="left:211.3px;top:896.6px;font-size:11px;font-weight:bold;color:#434a63;transform:scaleX(1.018);">DAILY SERVICE HOURS OVERVIEW</div>
<div class="a" style="left:212px;top:929px;width:9px;height:9px;border-radius:2px;background:#8ccab3"></div>
<div class="t" style="left:227.3px;top:927.6px;font-size:11px;font-weight:normal;color:#262b3a;-webkit-text-stroke:0.35px #262b3a;transform:scaleX(1.056);">Planned Daily Hours - <b>24h:00m</b></div>
<div class="a" style="left:212px;top:952px;width:9px;height:9px;border-radius:2px;background:#ee9f96"></div>
<div class="t" style="left:227.3px;top:950.6px;font-size:11px;font-weight:normal;color:#262b3a;-webkit-text-stroke:0.35px #262b3a;transform:scaleX(1.044);">Delivered Daily Hours - <b>24h:00m</b></div>
<div class="t" style="left:587.1px;top:926.9px;font-size:15px;font-weight:bold;color:#2a2f3e;transform:scaleX(1.114);">24h:00m</div>
<div class="t" style="left:587.1px;top:949.2px;font-size:15px;font-weight:bold;color:#2a2f3e;transform:scaleX(1.114);">24h:00m</div>
<div class="t" style="left:939.0px;top:835.6px;font-size:11px;font-weight:bold;color:#434a63;transform:scaleX(1.046);">FULFILLMENT</div>
<div class="t" style="left:938.4px;top:856.8px;font-size:21px;font-weight:bold;color:#1a1f2e;">149h:00m</div>
<div class="t" style="left:878.3px;top:896.9px;font-size:11px;font-weight:bold;color:#434a63;transform:scaleX(1.010);">SHITT SERVICE HOURS OVERVIEW</div>
<div class="a" style="left:877px;top:928px;width:394px;height:11px;background:linear-gradient(180deg,#6bb08a,#5ea77c);border-radius:1px"></div>
<div class="t" style="left:1278.5px;top:925.8px;font-size:16px;font-weight:bold;color:#2a2f3e;transform:scaleX(1.081);">168h:00m vs 149h:32m</div>
<div class="a" style="left:877px;top:950px;width:613px;height:14px;background:#e6e8ef"></div>
<div class="a" style="left:877px;top:950px;width:251px;height:14px;background:linear-gradient(90deg,#8aa2dc,#95ade4)"></div>
<div class="a" style="left:174px;top:975px;width:1362px;height:49px;background:linear-gradient(180deg,#f7f7fa,#fdfdfe 40%);box-shadow:0 -1px 2px rgba(40,50,90,0.05)"></div>
<div class="t" style="left:197.2px;top:993.0px;font-size:13px;font-weight:normal;color:#4a5064;-webkit-text-stroke:0.2px #4a5064;transform:scaleX(1.021);">&copy; 2026 ViPatrol - Version 1.1.0.2</div>
<div class="t" style="left:1218.0px;top:993.0px;font-size:13px;font-weight:normal;color:#3f4558;-webkit-text-stroke:0.2px #3f4558;">Design &amp; Develop by V Patrol Security Scin. Bhd.</div>
<div class="a" style="left:174px;top:59px;width:26px;height:916px;background:linear-gradient(90deg,rgba(120,125,150,0.12),rgba(120,125,150,0))"></div>
<div class="a" style="left:174px;top:236px;width:0;height:0;border-top:13px solid transparent;border-bottom:13px solid transparent;border-left:4px solid rgba(40,60,120,0.75)"></div>
</body></html>
